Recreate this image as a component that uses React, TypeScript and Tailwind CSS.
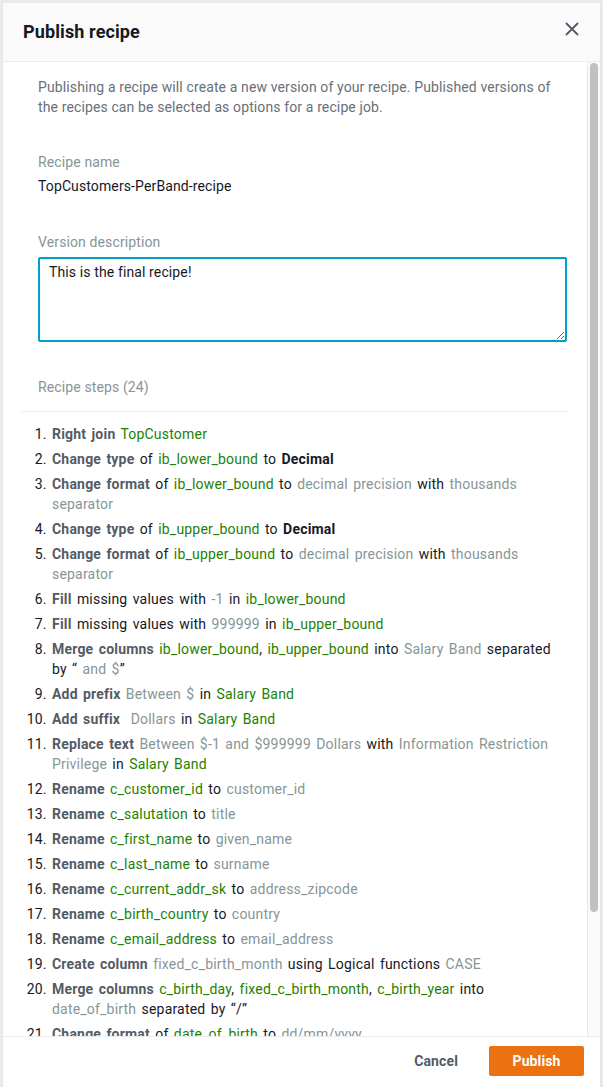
import React from "react";

type Seg = [string, string];

// b = bold action, k = bold black, g = green column, v = grey value, t = plain
const steps: Seg[][] = [
  [["b", "Right join"], ["t", " "], ["g", "TopCustomer"]],
  [["b", "Change type"], ["t", " of "], ["g", "ib_lower_bound"], ["t", " to "], ["k", "Decimal"]],
  [["b", "Change format"], ["t", " of "], ["g", "ib_lower_bound"], ["t", " to "], ["v", "decimal precision"], ["t", " with "], ["v", "thousands separator"]],
  [["b", "Change type"], ["t", " of "], ["g", "ib_upper_bound"], ["t", " to "], ["k", "Decimal"]],
  [["b", "Change format"], ["t", " of "], ["g", "ib_upper_bound"], ["t", " to "], ["v", "decimal precision"], ["t", " with "], ["v", "thousands separator"]],
  [["b", "Fill"], ["t", " missing values with "], ["v", "-1"], ["t", " in "], ["g", "ib_lower_bound"]],
  [["b", "Fill"], ["t", " missing values with "], ["v", "999999"], ["t", " in "], ["g", "ib_upper_bound"]],
  [["b", "Merge columns"], ["t", " "], ["g", "ib_lower_bound"], ["t", ", "], ["g", "ib_upper_bound"], ["t", " into "], ["v", "Salary Band"], ["t", " separated by\u00a0“"], ["v", "\u00a0and\u00a0$"], ["t", "”"]],
  [["b", "Add prefix"], ["t", " "], ["v", "Between $"], ["t", " in "], ["g", "Salary Band"]],
  [["b", "Add suffix"], ["t", " "], ["v", "\u00a0Dollars"], ["t", " in "], ["g", "Salary Band"]],
  [["b", "Replace text"], ["t", " "], ["v", "Between $-1 and $999999 Dollars"], ["t", " with "], ["v", "Information Restriction Privilege"], ["t", " in "], ["g", "Salary Band"]],
  [["b", "Rename"], ["t", " "], ["g", "c_customer_id"], ["t", " to "], ["v", "customer_id"]],
  [["b", "Rename"], ["t", " "], ["g", "c_salutation"], ["t", " to "], ["v", "title"]],
  [["b", "Rename"], ["t", " "], ["g", "c_first_name"], ["t", " to "], ["v", "given_name"]],
  [["b", "Rename"], ["t", " "], ["g", "c_last_name"], ["t", " to "], ["v", "surname"]],
  [["b", "Rename"], ["t", " "], ["g", "c_current_addr_sk"], ["t", " to "], ["v", "address_zipcode"]],
  [["b", "Rename"], ["t", " "], ["g", "c_birth_country"], ["t", " to "], ["v", "country"]],
  [["b", "Rename"], ["t", " "], ["g", "c_email_address"], ["t", " to "], ["v", "email_address"]],
  [["b", "Create column"], ["t", " "], ["v", "fixed_c_birth_month"], ["t", " using Logical functions "], ["v", "CASE"]],
  [["b", "Merge columns"], ["t", " "], ["g", "c_birth_day"], ["t", ", "], ["g", "fixed_c_birth_month"], ["t", ", "], ["g", "c_birth_year"], ["t", " into "], ["v", "date_of_birth"], ["t", " separated by “/”"]],
  [["b", "Change format"], ["t", " of "], ["g", "date_of_birth"], ["t", " to "], ["v", "dd/mm/yyyy"]],
  [["b", "Rename"], ["t", " "], ["g", "c_login"], ["t", " to "], ["v", "login"]],
  [["b", "Delete"], ["t", " "], ["g", "c_birth_day"]],
  [["b", "Delete"], ["t", " "], ["g", "c_birth_year"]],
];

function Piece({ seg }: { seg: Seg }) {
  const [kind, text] = seg;
  if (kind === "b") return <span className="font-bold text-[#545b64]">{text}</span>;
  if (kind === "k") return <span className="font-bold text-[#16191f]">{text}</span>;
  if (kind === "g") return <span className="text-[#1d8102]">{text}</span>;
  if (kind === "v") return <span className="text-[#879596]">{text}</span>;
  return <span>{text}</span>;
}

export default function App() {
  return (
    <div
      className="w-[603px] h-[1087px] overflow-hidden bg-[#e9ebed] pt-[3px] pl-[2px] pr-[2px] tracking-[0.12px]"
      style={{ fontFamily: "Roboto, 'Liberation Sans', sans-serif" }}
    >
      <div className="flex flex-col h-full bg-white border-x border-[#e2e4e6]">
        {/* header */}
        <div className="h-[59px] shrink-0 bg-[#fafafa] border-b border-[#eaeded] flex items-center justify-between pl-[20px] pr-[20px]">
          <h2 className="text-[18px] font-bold text-[#16191f] leading-[22px]">Publish recipe</h2>
          <svg width="16" height="16" viewBox="0 0 16 16" className="mt-[-6px]">
            <path d="M2 2 L14 14 M14 2 L2 14" stroke="#545b64" strokeWidth="1.8" fill="none" />
          </svg>
        </div>

        {/* body */}
        <div className="flex h-[975px] shrink-0 border-b border-[#eaeded]">
          <div className="flex-1 overflow-hidden pl-[18px] pr-[20px] pt-[15px]">
            <div className="pl-[17px]">
              <p className="text-[14px] leading-[20px] text-[#687078]">
                Publishing a recipe will create a new version of your recipe. Published versions of the recipes can be
                selected as options for a recipe job.
              </p>

              <div className="mt-[35px] text-[14px] leading-[20px] text-[#879596]">Recipe name</div>
              <div className="mt-[4px] text-[14px] leading-[20px] text-[#16191f]">TopCustomers-PerBand-recipe</div>

              <div className="mt-[36px] text-[14px] leading-[20px] text-[#879596]">Version description</div>
              <textarea
                readOnly
                defaultValue="This is the final recipe!"
                className="mt-[5px] block w-full h-[85px] border-2 border-[#00a1c9] rounded-[2px] px-[9px] py-[3px] text-[14px] leading-[20px] text-[#16191f] outline-none"
              />

              <div className="mt-[35px] text-[14px] leading-[20px] text-[#879596]">Recipe steps (24)</div>
            </div>
            <div className="mt-[14px] border-t border-[#eaeded]" />
            <ol className="list-decimal pl-[31px] pt-[12px] text-[14px] leading-[20px] text-[#16191f] tracking-[0.2px] [word-spacing:1.6px]">
              {steps.map((s, i) => (
                <li key={i} className="mb-[5px]">
                  {s.map((seg, j) => (
                    <Piece key={j} seg={seg} />
                  ))}
                </li>
              ))}
            </ol>
          </div>
          {/* scrollbar */}
          <div className="w-[13px] shrink-0 bg-[#fafafa] border-l border-[#e8e8e8] pt-[1px] pl-[2px]">
            <div className="w-[8px] h-[849px] rounded-full bg-[#c1c1c1]" />
          </div>
        </div>

        {/* footer */}
        <div className="flex items-start justify-end gap-[31px] pt-[9px] pr-[16px]">
          <button className="h-[30px] text-[14px] font-bold text-[#545b64]">Cancel</button>
          <button className="h-[30px] w-[95px] rounded-[2px] bg-[#ec7211] text-[14px] font-bold text-white">Publish</button>
        </div>
      </div>
    </div>
  );
}
